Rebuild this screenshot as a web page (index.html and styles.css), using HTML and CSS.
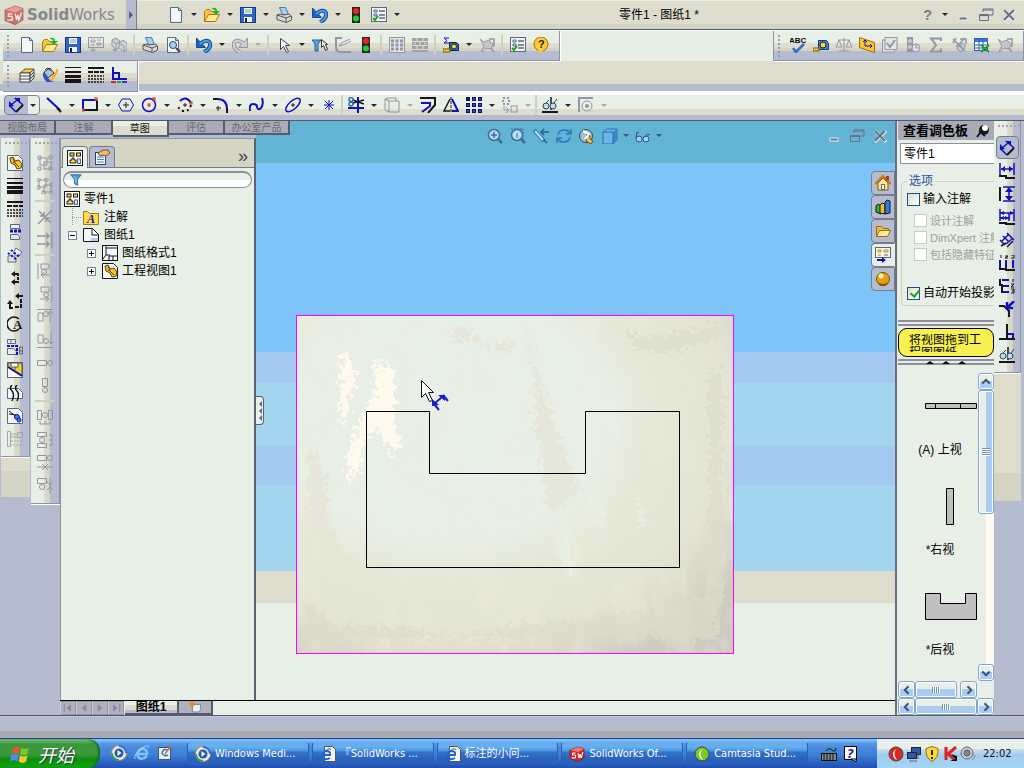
FILE: index.html
```
<!DOCTYPE html>
<html lang="zh-CN">
<head>
  <meta charset="UTF-8">
  <title>SolidWorks - 零件1 - 图纸1</title>
  <link rel="stylesheet" href="styles.css">
</head>
<body>
  <!-- Title bar -->
  <header class="titlebar">
    <div class="brand"><i data-icon="sw"></i><span><b>Solid</b>Works</span></div>
    <button class="expand" aria-label="展开菜单"></button>
    <div class="tools quick" data-items="new v open v save v print v undo v light options v"></div>
    <div class="doc-name">零件1 - 图纸1 *</div>
    <div class="tools window" data-items="help v min restore close"></div>
  </header>

  <!-- Toolbars -->
  <div class="bar-row bar-row-main">
    <div class="toolbar tools" data-items="new open save drawing assembly | print preview | undo v redo vg | select v filter sketch light | grid bricks | measure v zoomoff | options bubble"></div>
    <div class="toolbar tools" data-items="spell tape scales plane check clock sigma nodes table zoomoff"></div>
  </div>
  <div class="bar-row bar-row-line">
    <div class="toolbar tools" data-items="layers paint weight dashes corner"></div>
  </div>
  <div class="sketchbar tools" data-items="line v rect v hex circle v arc v fillet v spline v ellipse v point ; trim v convert vg offset mirror pattern v move vg ; relation v snap vg">
    <div class="split"><button class="tool" aria-label="智能尺寸"><i data-icon="dim"></i></button><button class="drop" aria-label="更多"></button></div>
  </div>

  <!-- Work area -->
  <main class="work">
    <nav class="tabs">
      <button>视图布局</button>
      <button>注解</button>
      <button class="active">草图</button>
      <button>评估</button>
      <button>办公室产品</button>
    </nav>

    <div class="side">
      <div class="side-col">
        <div class="vbar tools" data-items="part weight dashes partview projview breakA breakB circleA alignview section brokenline crop auxview"></div>
        <div class="filler"></div>
      </div>
      <div class="side-col">
        <div class="vbar tools" data-items="group ungroup | collapse toright | aleft aright atop abottom ahor aver | distH distV tightH tightV"></div>
      </div>
    </div>

    <aside class="tree-panel">
      <div class="tree-head">
        <button class="tree-tab active" aria-label="设计树"><i data-icon="tree"></i></button>
        <button class="tree-tab" aria-label="属性"><i data-icon="props"></i></button>
        <button class="more" aria-label="更多">»</button>
      </div>
      <label class="filter"><i data-icon="funnel"></i><input type="text" aria-label="过滤"></label>
      <ul class="tree">
        <li><i data-icon="tree"></i>零件1</li>
        <li class="lv1"><span class="dots"></span><i data-icon="folderA"></i>注解</li>
        <li class="lv1"><button class="node" aria-label="折叠"></button><i data-icon="sheet"></i>图纸1</li>
        <li class="lv2"><button class="node plus" aria-label="展开"></button><i data-icon="format"></i>图纸格式1</li>
        <li class="lv2"><button class="node plus" aria-label="展开"></button><i data-icon="partK"></i>工程视图1</li>
      </ul>
    </aside>

    <section class="canvas">
      <div class="view-tools tools" data-items="zoomfit zoomarea pencil rotate viewor cube v glasses v"></div>
      <div class="doc-buttons tools" data-items="min restore close"></div>
      <button class="flyout" aria-label="收起面板"><span></span><span></span><span></span></button>

      <svg class="paper" viewBox="0 0 438 339">
        <defs>
          <radialGradient id="paper" cx="0.34" cy="0.3" r="0.82">
            <stop offset="0" stop-color="#e8efe7"/>
            <stop offset="0.44" stop-color="#e8efe5"/>
            <stop offset="0.58" stop-color="#e6e8d8"/>
            <stop offset="0.8" stop-color="#e3e4d4"/>
            <stop offset="1" stop-color="#cdcdbf"/>
          </radialGradient>
          <!-- Large folds -->
          <filter id="crumple" x="0" y="0" width="100%" height="100%">
            <feTurbulence type="fractalNoise" baseFrequency="0.03 0.012" numOctaves="6" seed="8"/>
            <feColorMatrix values="0 0 0 0 0.86  0 0 0 0 0.85  0 0 0 0 0.75  6 0 0 0 -3"/>
          </filter>
          <filter id="rough" x="-10%" y="-10%" width="120%" height="120%">
            <feTurbulence type="fractalNoise" baseFrequency="0.2" numOctaves="4" seed="3"/>
            <feDisplacementMap in="SourceGraphic" scale="24" xChannelSelector="R" yChannelSelector="G"/>
          </filter>
        </defs>
        <rect width="438" height="339" fill="url(#paper)"/>
        <rect width="438" height="339" filter="url(#crumple)" opacity="0.35"/>
        <g filter="url(#rough)">
          <path fill="#e6e7d7" opacity="0.9" d="M232 6l8 44 22 70 22 58-30 22-14-80-4-70zM12 120l18 45 4 50 30 40-30-8-22-50zM150 22l14-12 30 22 34-12-20 20-18-8z"/>
          <path fill="#dcdccc" opacity="0.7" d="M330 14l20 10 78-16v14l-60 16-30-4zM10 286l30 24 80 4 40 8 60-12 80-6 60-8 60-20v48h-410zM412 60l14-10v240l-20-40 8-70z"/>
          <path fill="#e8efe7" opacity="0.9" d="M245 48l35 22 12 40 2 50 20 70-22-44-26-80zM268 180l10 90-16-30 6-40zM340 170l12 44-10-10zM310 60l16 30-6 40-10-20z"/>
          <path fill="#fffaee" d="M48 30l14 38-6 6-5 24-5 20-2-56zM79 48l6-8 2 14 10-4 2 60 6 20-8 12-16-30-8 6-10 34-10 20-2-30 16-46 12-20z"/>
        </g>
        <rect x="0.5" y="0.5" width="437" height="338" fill="none" stroke="#f0f"/>
        <path d="M70.500 96.500h63v62h156v-62h94v156h-313z" fill="none" stroke="#000"/>
        <path d="M125.500 65.500v17l4-4 4 8 3-1-4-8h5z" fill="#fff" stroke="#111"/>
        <path d="M143 95l-5-6M147 80l5 6M138 89l8-7" fill="none" stroke="#1a20c8" stroke-width="2"/>
        <path d="M136 91v-7l7 6zM142 80h7v6z" fill="#1a20c8"/>
      </svg>

      <div class="pane-tabs">
        <button aria-label="资源"><i data-icon="house"></i></button>
        <button aria-label="设计库"><i data-icon="books"></i></button>
        <button aria-label="文件探索器"><i data-icon="folder"></i></button>
        <button class="active" aria-label="查看调色板"><i data-icon="palette"></i></button>
        <button aria-label="外观"><i data-icon="ball"></i></button>
      </div>
    </section>

    <div class="sheets">
      <button class="nav" aria-label="第一页"><i data-icon="first"></i></button>
      <button class="nav" aria-label="上一页"><i data-icon="prev"></i></button>
      <button class="nav" aria-label="下一页"><i data-icon="next"></i></button>
      <button class="nav" aria-label="最后一页"><i data-icon="last"></i></button>
      <button class="sheet active">图纸1</button>
      <button class="sheet add" aria-label="添加图纸"><i data-icon="addsheet"></i></button>
    </div>

    <!-- View palette -->
    <aside class="palette">
      <h2>查看调色板<i data-icon="pin"></i></h2>
      <select aria-label="零件"><option>零件1</option></select>
      <fieldset>
        <legend>选项</legend>
        <label><input type="checkbox">输入注解</label>
        <label class="sub"><input type="checkbox" disabled>设计注解</label>
        <label class="sub"><input type="checkbox" disabled>DimXpert 注解</label>
        <label class="sub"><input type="checkbox" disabled>包括隐藏特征</label>
        <label class="auto"><input type="checkbox" checked>自动开始投影</label>
      </fieldset>
      <div class="splitter"></div>
      <div class="tip"><p>将视图拖到工程图图纸</p></div>
      <div class="splitter arrows"><span></span><span></span><span></span></div>
      <div class="views">
        <div class="view-list">
          <figure>
            <div class="shape"><svg width="52" height="6"><path d="M.5.5h51v5h-51zM10.500.5v5M35.500.5v5" fill="#c0c0c0" stroke="#000"/></svg></div>
            <figcaption>(A) 上视</figcaption>
          </figure>
          <figure>
            <div class="shape"><svg width="52" height="37"><path d="M21.500.5h7v36h-7z" fill="#c0c0c0" stroke="#000"/></svg></div>
            <figcaption>*右视</figcaption>
          </figure>
          <figure>
            <div class="shape"><svg width="52" height="27"><path d="M.5.5h15v10h25v-10h11v26h-51z" fill="#c0c0c0" stroke="#000"/></svg></div>
            <figcaption>*后视</figcaption>
          </figure>
        </div>
        <div class="scroll vertical">
          <button aria-label="向上"><i data-icon="up"></i></button><div class="thumb"></div><button aria-label="向下"><i data-icon="down"></i></button>
        </div>
      </div>
      <div class="scroll inner">
        <button aria-label="向左"><i data-icon="left"></i></button><div class="thumb"></div><button aria-label="向右"><i data-icon="right"></i></button>
      </div>
      <div class="scroll">
        <button aria-label="向左"><i data-icon="left"></i></button><div class="thumb"></div><button aria-label="向右"><i data-icon="right"></i></button>
      </div>
    </aside>

    <div class="right-col">
      <div class="vbar tools" data-items="dim hdim vdim basedim orddim hord vord chamfer datum relation"></div>
      <div class="filler"></div>
    </div>
  </main>

  <footer class="status"></footer>

  <!-- Windows taskbar -->
  <footer class="taskbar">
    <button class="start"><i data-icon="windows"></i>开始</button>
    <div class="launch">
      <button aria-label="播放器"><i data-icon="wmp"></i></button>
      <button aria-label="浏览器"><i data-icon="ie"></i></button>
      <button aria-label="桌面"><i data-icon="desk"></i></button>
    </div>
    <div class="tasks">
      <button><i data-icon="wmp"></i>Windows Medi...</button>
      <button><i data-icon="iepage"></i>『SolidWorks ...</button>
      <button><i data-icon="iepage"></i>标注的小问...</button>
      <button><i data-icon="sw"></i>SolidWorks Of...</button>
      <button><i data-icon="cam"></i>Camtasia Stud...</button>
    </div>
    <div class="lang"><i data-icon="keyboard"></i><i data-icon="qmark"></i></div>
    <div class="tray">
      <i data-icon="camred"></i><i data-icon="net"></i><i data-icon="shield"></i><i data-icon="kav"></i><i data-icon="speaker"></i>
      <time>22:02</time>
    </div>
  </footer>

  <script src="icons.js"></script>
</body>
</html>
```
FILE: styles.css
```
* {
  box-sizing: border-box;
}

body {
  margin: 0;
  height: 100vh;
  display: flex;
  flex-direction: column;
  overflow: hidden;
  background: #b6bccf;
  color: #000;
  font: 12px/14px "Liberation Sans", "Noto Sans CJK SC", sans-serif;
}

button, input, select {
  font: inherit;
  margin: 0;
  padding: 0;
}

button {
  border: 0;
  background: none;
  color: inherit;
}

i {
  display: block;
  flex: none;
  width: 16px;
  height: 16px;
}

i svg {
  display: block;
  width: 16px;
  height: 16px;
}

/* Shared tool buttons */
.tools {
  display: flex;
  align-items: center;
}

.tool {
  display: flex;
  flex: none;
  align-items: center;
  justify-content: center;
  width: 23px;
  height: 23px;
}

.drop {
  flex: none;
  width: 13px;
  height: 20px;
  display: flex;
  align-items: center;
  justify-content: center;
}

.drop::after {
  content: "";
  border: 3px solid transparent;
  border-top-color: #222838;
  border-bottom: 0;
}

.drop.off::after {
  border-top-color: #a8aab0;
}

.sep {
  flex: none;
  width: 8px;
  height: 20px;
  padding: 0 3px;
  background: #d0d0c0 content-box;
}

.sep.small {
  width: 4px;
  padding: 0 1px;
}

/* Title bar */
.titlebar {
  flex: none;
  display: flex;
  align-items: center;
  height: 30px;
  border-bottom: 1px solid #555a68;
  background: linear-gradient(#e8eee6 1px, #dddccd 1px, #dddccd 24px, #d4d4c4 24px);
}

.brand {
  display: flex;
  align-items: center;
  gap: 3px;
  width: 126px;
  height: 29px;
  padding-left: 4px;
  background: linear-gradient(#dddccd 24px, #cfcfc3 24px);
  color: #85878d;
  font: 15px/20px "DejaVu Sans", sans-serif;
}

.brand i, .brand i svg {
  width: 20px;
  height: 20px;
}

.brand i {
  opacity: 0.6;
}

.expand {
  width: 11px;
  height: 29px;
  display: flex;
  align-items: center;
  justify-content: center;
  background: #b6bccf;
  border-right: 1px solid #777c8c;
}

.expand::after {
  content: "";
  border: 4px solid transparent;
  border-left-color: #555d80;
  border-right: 0;
}

.quick {
  padding-left: 27px;
}

.doc-name {
  flex: 1;
  text-align: center;
}

.window {
  padding-right: 4px;
}

/* Horizontal toolbars */
.bar-row {
  flex: none;
  height: 31px;
  display: flex;
  justify-content: space-between;
  padding-left: 3px;
}

.bar-row-main {
  border-top: 1px solid #fff;
  background: #e6ede5;
}

.bar-row-line {
  background: linear-gradient(#dddccd 23px, #b6bccf 23px, #b6bccf 30px, #fff 30px);
}

.toolbar {
  padding: 0 7px 2px 12px;
  background: linear-gradient(#e8efe7 12px, #dddccd 12px, #dddccd 17px, #d4d4c4 17px, #d4d4c4 20px, #b6bccf 20px);
  border-right: 1px solid #8f93a4;
  border-bottom: 1px solid #8f93a4;
  box-shadow: 1px 1px 0 #fff;
  position: relative;
}

.toolbar::before {
  content: "";
  position: absolute;
  left: 4px;
  top: 4px;
  width: 2px;
  height: 22px;
  background: repeating-linear-gradient(#999dae 0 2px, transparent 2px 4px);
}

.toolbar + .toolbar {
  border-left: 1px solid #8f93a4;
}

.sketchbar {
  flex: none;
  height: 29px;
  padding: 0 0 5px 4px;
  border-top: 3px solid #fff;
  border-bottom: 1px solid #555a68;
  background: linear-gradient(#e8efe7 14px, #dddccd 14px, #dddccd 20px, #b6bccf 20px);
}

.split {
  display: flex;
  align-items: center;
  width: 36px;
  height: 20px;
  margin-right: 2px;
  border: 1px solid #7d8192;
  border-radius: 4px;
  background: linear-gradient(90deg, #b6bccf 23px, #e8efe7 23px);
}

.split .tool {
  width: 22px;
  height: 18px;
}

.split .drop {
  width: 12px;
}

/* Work area */
.work {
  flex: 1;
  min-height: 0;
  display: grid;
  grid-template-columns: 60px 196px 1fr 99px 30px;
  grid-template-rows: 17px 1fr 15px;
}

.tabs {
  grid-column: 1 / 3;
  grid-row: 1;
  z-index: 1;
  display: flex;
  align-items: flex-start;
  width: 290px;
}

.tabs button {
  flex: 57 0 0;
  height: 14px;
  border: solid #555b70;
  border-width: 0 2px 2px 0;
  background: #aaabb6;
  color: #666974;
  font-size: 10px;
  line-height: 11px;
  white-space: nowrap;
}

.tabs button:last-child {
  flex-grow: 66;
}

.tabs .active {
  height: 16px;
  background: linear-gradient(#e8efe7 5px, #dddccd 5px);
  color: #111;
}

.side {
  grid-column: 1;
  grid-row: 2 / 4;
  display: flex;
}

.side-col {
  width: 30px;
  padding-left: 1px;
}

.vbar {
  flex-direction: column;
  position: relative;
  padding: 13px 1px 6px 0;
  border-right: 1px solid #8f93a4;
  border-bottom: 1px solid #8f93a4;
  box-shadow: 0 1px 0 #fff;
  background: linear-gradient(90deg, #e8efe7 13px, #dddccd 13px, #d4d4c4 19px, #b6bccf 19px);
}

.vbar::before {
  content: "";
  position: absolute;
  left: 4px;
  top: 4px;
  width: 22px;
  height: 2px;
  background: repeating-linear-gradient(90deg, #a3a6b5 0 2px, transparent 2px 4px);
}

.vbar .sep {
  width: 20px;
  height: 8px;
  padding: 3px 0;
}

.filler {
  height: 40px;
  background: linear-gradient(#dddccd 35%, #d4d4c4 35%);
}

/* Feature tree */
.tree-panel {
  grid-column: 2;
  grid-row: 2;
  border: solid #8f93a4;
  border-width: 1px 2px 0 1px;
  border-right-color: #5a6075;
  background: #e8efe6;
}

.tree-head {
  display: flex;
  align-items: flex-end;
  gap: 1px;
  height: 29px;
  padding-left: 1px;
  border-bottom: 1px solid #777c8c;
  background: #d5d5c6;
}

.tree-tab {
  display: flex;
  align-items: center;
  justify-content: center;
  width: 26px;
  height: 21px;
  border: 1px solid #777c8c;
  border-bottom: 0;
  border-radius: 4px 4px 0 0;
  background: #b6bccf;
}

.tree-tab.active {
  height: 22px;
  margin-bottom: -1px;
  background: #e8efe6;
}

.more {
  margin-left: auto;
  padding: 0 6px 4px 0;
  color: #444;
  font-size: 18px;
}

.filter {
  display: flex;
  align-items: center;
  height: 17px;
  margin: 3px 2px 0;
  padding-left: 6px;
  border: 1px solid #8c8e9c;
  border-top-width: 2px;
  border-radius: 9px;
  background: linear-gradient(#e8efe7 50%, #fff 50%);
}

.filter input {
  flex: 1;
  min-width: 0;
  height: 12px;
  border: 0;
  outline: 0;
  background: none;
}

.filter i, .filter i svg {
  width: 12px;
  height: 12px;
}

.tree {
  margin: 2px 0 0;
  padding: 0;
  list-style: none;
}

.tree li {
  display: flex;
  align-items: center;
  gap: 4px;
  height: 18px;
  padding-left: 3px;
}

.tree .lv1 {
  gap: 5px;
  padding-left: 7px;
}

.tree .lv2 {
  padding-left: 26px;
}

.tree .lv2 i {
  margin-left: 2px;
}

.dots {
  width: 9px;
  height: 18px;
  margin-right: -4px;
  margin-left: 4px;
  background:
    repeating-linear-gradient(#9a9ca8 0 1px, transparent 1px 2px) 0 0 / 1px 100% no-repeat,
    repeating-linear-gradient(90deg, #9a9ca8 0 1px, transparent 1px 2px) 0 50% / 100% 1px no-repeat;
}

.lv1 i {
  margin-left: 1px;
}

.node {
  width: 9px;
  height: 9px;
  border: 1px solid #7c8294;
  background: linear-gradient(#000, #000) center / 5px 1px no-repeat, #fff;
}

.plus {
  background: linear-gradient(#000, #000) center / 5px 1px no-repeat, linear-gradient(#000, #000) center / 1px 5px no-repeat, #fff;
}

/* Drawing canvas */
.canvas {
  grid-column: 3;
  grid-row: 1 / 3;
  position: relative;
  overflow: hidden;
  background: linear-gradient(#62b3d4 42px, #7dc5f8 42px, #7dc5f8 231px, #a4c8ef 231px, #a4c8ef 262px, #a3d5ef 262px, #a3d5ef 325px, #a4c8ef 325px, #a4c8ef 364px, #a3d5ef 364px, #a3d5ef 450px, #dddccd 450px, #dddccd 482px, #e8efe6 482px);
}

.view-tools {
  position: absolute;
  left: 227px;
  top: 3px;
}

.view-tools .drop {
  width: 10px;
}

.view-tools .drop::after {
  border-top-color: #2c5c88;
}

.doc-buttons {
  position: absolute;
  right: 4px;
  top: 3px;
}

.paper {
  position: absolute;
  left: 40px;
  top: 194px;
  width: 438px;
  height: 339px;
}

.flyout {
  position: absolute;
  left: 0;
  top: 275px;
  display: flex;
  flex-direction: column;
  align-items: flex-end;
  justify-content: space-around;
  width: 8px;
  height: 29px;
  padding: 3px 1px;
  border: 1px solid #5a6075;
  border-left: 0;
  border-radius: 0 4px 4px 0;
  background: #e8efe6;
}

.flyout span {
  border: 3px solid transparent;
  border-right-color: #5d6498;
  border-left: 0;
}

.pane-tabs {
  position: absolute;
  right: 0;
  top: 50px;
  display: flex;
  flex-direction: column;
}

.pane-tabs button {
  display: flex;
  align-items: center;
  justify-content: center;
  width: 24px;
  height: 24px;
  border: 1px solid #777c8c;
  border-radius: 4px 0 0 4px;
  background: #b6bccf;
}

.pane-tabs .active {
  background: #e8efe6;
  border-right-color: #e8efe6;
}

.sheets {
  grid-column: 2 / 4;
  grid-row: 3;
  display: flex;
  border-top: 1px solid #000;
  background: #e8efe6;
}

.nav {
  display: flex;
  align-items: center;
  justify-content: center;
  width: 16px;
  height: 14px;
  border: 1px solid #8f93a4;
  border-left-color: #c8cad4;
  background: #b0b1bd;
}

.nav i, .nav i svg {
  width: 12px;
  height: 12px;
}

.sheet {
  width: 54px;
  height: 14px;
  margin-left: 1px;
  border: solid #555b70;
  border-width: 0 2px 2px 0;
  background: linear-gradient(#e8efe7 4px, #dddccd 4px, #dddccd 9px, #b6bccf 9px);
  font-weight: bold;
  line-height: 12px;
}

.sheet.add {
  display: flex;
  align-items: center;
  justify-content: center;
  width: 34px;
  margin: 0;
  background: #b0b1bd;
}

.add i, .add i svg {
  width: 12px;
  height: 12px;
}

/* View palette */
.palette {
  grid-column: 4;
  grid-row: 1 / 4;
  display: flex;
  flex-direction: column;
  overflow: hidden;
  min-width: 0;
  border-left: 2px solid #696e82;
  padding-left: 1px;
  background: #e8efe6;
}

.palette h2 {
  flex: none;
  display: flex;
  align-items: center;
  justify-content: space-between;
  height: 19px;
  margin: 0;
  padding: 0 3px 0 5px;
  background: #aaabb6;
  font-size: 13px;
  line-height: 18px;
  white-space: nowrap;
}

.palette select {
  flex: none;
  height: 21px;
  margin: 3px 0 0 2px;
  padding-left: 3px;
  border: 1px solid #8c8e9c;
  border-right: 0;
  border-radius: 0;
  appearance: none;
  background: #fff;
}

.palette fieldset {
  flex: none;
  min-width: 0;
  height: 132px;
  margin: 10px 0 0 3px;
  padding: 1px 0 0 5px;
  border: 1px solid #cfd0c4;
  border-right: 0;
  border-radius: 5px 0 0 5px;
  white-space: nowrap;
}

.palette legend {
  padding: 0 2px;
  color: #2b4ea8;
}

.palette label {
  display: flex;
  align-items: center;
  gap: 3px;
  height: 20px;
}

.palette .sub {
  height: 17px;
  padding-left: 7px;
  color: #a0a19a;
  font-size: 11px;
}

.palette .sub:nth-of-type(2) {
  margin-top: 3px;
}

.palette .auto {
  margin-top: 20px;
}

.palette input {
  flex: none;
  appearance: none;
  width: 13px;
  height: 13px;
  border: 1px solid #1c5180;
  background: linear-gradient(135deg, #dddccd, #fff);
}

.palette input:disabled {
  border-color: #cacbc0;
  background: #fff;
}

.palette input:checked::after {
  content: "";
  display: block;
  width: 4px;
  height: 7px;
  margin-left: 4px;
  border: solid #21a121;
  border-width: 0 2px 2px 0;
  transform: rotate(40deg);
}

.splitter {
  flex: none;
  height: 6px;
  margin: 14px 0 2px;
  border: solid #8f8f9c;
  border-width: 2px 0;
}

.splitter.arrows {
  display: flex;
  justify-content: center;
  gap: 8px;
  margin: 2px 0 0;
}

.arrows span {
  border: 4px solid transparent;
  border-bottom: 3px solid #000;
  border-top: 0;
  height: 3px;
}

.tip {
  flex: none;
  height: 29px;
  padding: 5px 10px 0;
  border: 1px solid #000;
  border-radius: 9px;
  background: #f8f04e;
}

.tip p {
  width: 74px;
  height: 18px;
  margin: 0;
  overflow: hidden;
  line-height: 13px;
  word-break: break-all;
}

.views {
  flex: 1;
  min-height: 0;
  display: flex;
  overflow: hidden;
}

.view-list {
  flex: 1;
  min-width: 0;
}

.view-list figure {
  height: 100px;
  margin: 0;
  padding-top: 4px;
}

.shape {
  display: flex;
  align-items: center;
  height: 74px;
  padding-left: 27px;
}

.shape svg {
  flex: none;
}

.view-list figcaption {
  padding-left: 4px;
  text-align: center;
}

.scroll {
  flex: none;
  display: flex;
  height: 17px;
}

.scroll button, .thumb {
  display: flex;
  align-items: center;
  justify-content: center;
  border: 1px solid #7ea6cf;
  border-radius: 3px;
  box-shadow: inset 0 0 0 1px #fff;
  background: linear-gradient(#e8efe7 50%, #a9cdf2 50%);
}

.scroll button {
  flex: none;
  width: 17px;
  height: 17px;
}

.scroll i, .scroll i svg {
  width: 12px;
  height: 12px;
}

.thumb {
  flex: 1;
}

.thumb::after {
  content: "";
  width: 8px;
  height: 6px;
  background: repeating-linear-gradient(90deg, #7590bb 0 1px, #fff 1px 2px);
}

.scroll.inner {
  width: 79px;
}

.scroll.inner .thumb {
  margin-right: 3px;
}

.scroll.vertical {
  flex-direction: column;
  width: 16px;
  height: auto;
  margin: 8px 0 0;
  background: linear-gradient(90deg, #e8efe6 50%, #fffaf0 50%);
}

.vertical button {
  width: 16px;
}

.vertical .thumb {
  flex: 0 1 124px;
  margin-bottom: auto;
  background: linear-gradient(90deg, #e8efe7 50%, #a9cdf2 50%);
}

.vertical .thumb::after {
  height: 8px;
  background: repeating-linear-gradient(#7590bb 0 1px, #fff 1px 2px);
}

.right-col {
  grid-column: 5;
  grid-row: 1 / 4;
  padding-right: 3px;
}

.right-col .vbar {
  padding: 15px 0 6px;
}

.right-col .filler {
  height: 128px;
  background: linear-gradient(#dddccd 100px, #d4d4c4 100px);
}

.right-col .tool:first-child {
  border: 1px solid #777c8c;
  border-radius: 4px;
  background: #b6bccf;
}

.status {
  flex: none;
  height: 23px;
  border-top: 1px solid #555a68;
  background: linear-gradient(#c4c9d8 1px, #b6bccf 1px, #b6bccf 15px, #aaabb2 15px);
}

/* Windows taskbar */
.taskbar {
  flex: none;
  height: 30px;
  display: flex;
  align-items: stretch;
  border-top: 1px solid #1c44a8;
  background: linear-gradient(#76bdf5 3px, #5f9fe8 3px, #4a8cdf 8px, #3f80d4 16px, #2a64c4 23px, #1f4fb0);
  color: #fff;
  font: 11px/14px "DejaVu Sans Condensed", "Noto Sans CJK SC", sans-serif;
}

.start {
  display: flex;
  align-items: center;
  gap: 8px;
  width: 100px;
  padding-left: 10px;
  border-radius: 0 12px 12px 0;
  background: linear-gradient(#7cc47c, #3c963c 5px, #3a9a3a 16px, #0e8c0e 20px, #0cab0c);
  box-shadow: inset -2px 0 2px #1b6a2b;
  font: italic 18px/20px "Noto Sans CJK SC", sans-serif;
  text-shadow: 1px 1px 1px #234;
}

.start i, .start i svg {
  width: 20px;
  height: 20px;
}

.launch {
  display: flex;
  align-items: center;
  gap: 7px;
  padding: 0 14px 2px 11px;
}

.tasks {
  flex: 1;
  display: flex;
  gap: 3px;
  padding: 3px 13px 3px 0;
}

.tasks button {
  flex: 1;
  min-width: 0;
  display: flex;
  align-items: center;
  gap: 4px;
  padding-left: 7px;
  border: 1px solid #2b60b8;
  border-top-color: #7c9ee0;
  border-radius: 3px;
  background: linear-gradient(#62b0f0 4px, #4a94e0 8px, #3572c8 9px, #2b62bc 16px, #2b60bc);
  white-space: nowrap;
}

.lang {
  display: flex;
  align-items: center;
  gap: 6px;
  padding-right: 18px;
}

.tray {
  display: flex;
  align-items: center;
  gap: 2px;
  width: 147px;
  padding-left: 11px;
  background: linear-gradient(#e8efe7 10px, #ccdff0 10px, #a3cbee 16px, #a3d5f4);
  color: #111;
}

.tray time {
  margin-left: 5px;
}
```
FILE: icons.js
```
// Small helpers for 16x16 icon shapes
const s = (c, d, w = 1) => `<path d="${d}" fill="none" stroke="${c}" stroke-width="${w}"/>`;
const f = (c, d, o = 'none') => `<path d="${d}" fill="${c}" stroke="${o}"/>`;
const c = (x, y, r, fill, o = 'none', w = 1) => `<circle cx="${x}" cy="${y}" r="${r}" fill="${fill}" stroke="${o}" stroke-width="${w}"/>`;
const r = (x, y, w, h, fill, o = 'none') => `<rect x="${x}" y="${y}" width="${w}" height="${h}" fill="${fill}" stroke="${o}"/>`;
const t = (x, y, size, color, text, style = '') => `<text x="${x}" y="${y}" font-size="${size}" fill="${color}" ${style}>${text}</text>`;

const B = '#1010c0', G = '#9496a2', K = '#16161c', N = '#5a6980';

const page = f('#f2f6fa', 'M2.500.5h8l3 3v12h-11z', N) + s(N, 'M10.500.5v3h3');
const pageWide = (o) => f('#f2f6fa', 'M.5.5h11l4 4v11h-15z', o);
const clip = f('#f5c52a', 'M3 3l3-1 2 4 4-1 3 4-1 4-4 1-2-4-4-2z', '#5c430c') + s('#5c430c', 'M6 3l2 5 4 4M8 6l-2 2');
const sheetTree = r(.5, .5, 15, 15, '#fff', K) + r(3, 3, 4, 3, '#ffe040', K) + r(9.500, 3, 4, 3, '#ffe040', K) + f('#ffe040', 'M5 8h2v2h2v3h-6v-3h2z', K) + r(10.500, 9, 3, 4.500, '#cfe2fa', N);
const lens = (x) => c(7, 7, 5.500, '#b9dcf4', '#3c6ea0', 1.500) + s('#3c6ea0', 'M11 11l4 4', 2.500) + x;
const ball = (a) => c(8, 8, 7, a, '#444') + f('#fff', 'M11 2Q3 5 9 14Q5 12 5 8Q5 4 11 2z');

const icons = {
  sw: f('#c92c2c', 'M1 4l8-3 6 2v9l-6 3.500-8-3z', '#8b2222') + f('#e77', 'M1 4l8-3 6 2-6 3z') + s('#fff', 'M6.500 7h-3v2h3v3h-4', 1) + s('#fff', 'M9 7l1 5 1-4 1 4 2-6', 1),
  new: page,
  open: f('#f6c444', 'M.5 14.500v-10l2-2h3l2 2h5v3', '#a87818') + f('#ffe890', 'M.5 14.500l4-7h11l-4 7z', '#a87818') + f('#28b428', 'M8 1q5-1 5 3h3l-4 4-4-4h3q0-2-3-2z'),
  save: r(.5, .5, 15, 15, '#2c66cc', '#16387e') + r(4, 1, 8, 6, '#eef4fa') + s('#8aa', 'M5 3h6M5 5h6') + r(4, 10, 8, 5, '#eef4fa') + r(5, 11, 2, 4, '#222'),
  print: f('#a8d0f4', 'M3.500.5h6l3 7h-6z', '#4d78a8') + f('#d8dad8', 'M1 8l3-1 3 1 6-1 2.500 2v4l-5 2.500-9.500-3z', '#555') + s('#555', 'M1 8l9 3 5-2M10 11v4'),
  preview: page + c(8, 8, 3.500, '#a8d4f4', '#345') + s('#345', 'M11 11l4 4', 2),
  undo: s('#164b94', 'M4 7q7-6 10-1 1 6-6 9', 4) + f('#1c64c4', 'M.5 1v9.500h9z', '#164b94') + s('#4ca0ec', 'M4 7q7-6 10-1 1 6-6 9', 2),
  redo: s(G, 'M12 7q-7-6-10-1-1 6 6 9', 4) + f('#c9ccd0', 'M15.500 1v9.500h-9z', G) + s('#d4d6d6', 'M12 7q-7-6-10-1-1 6 6 9', 2),
  light: r(4, 0, 8, 16, '#262626') + c(8, 4, 3, '#ee2222') + c(8, 11.500, 3, '#22cc33'),
  options: r(.5, .5, 15, 14, '#eef3fa', N) + s('#222', 'M8 4h6M8 8h6M8 11h6') + s(N, 'M3 3h3v2h-3zM3 7h3v2h-3z') + s('#16a016', 'M2 11l2 2 3-4', 2),
  drawing: r(.5, .5, 15, 10, 'none', G) + s(G, 'M3 3h4v2h-4zM9 3h4M9 6h4v2h-4zM3 8h3M5 10v5M2 13h6'),
  assembly: f('#d0d2d0', 'M1 3l4-2 4 3v6l-4 3-4-4z', G) + f('#d0d2d0', 'M8 6l4-3 4 3v7l-3 2-5-4z', G) + s(G, 'M5 7l4-3M1 3l4 4v6M8 6l5 3v6M1 13h5M4 11v4', 1),
  select: f('#eef', 'M4.500 1.500v11l3-3 3 6 2-1-3-6h4z', '#444'),
  filter: f('#58a4e0', 'M0 3h9l-3 4v7h-3v-7z', '#245f9c') + f('#eee', 'M9.500 2.500v8l2-2 2 5 2-1-2-5h2z', '#333'),
  sketch: s(G, 'M7 1h-6v9q0 5 5 5h10', 2) + s(G, 'M15 2l-9 4-2 3 4-1 8-4'),
  grid: r(.5, .5, 15, 15, '#e4e7e8', G) + [3, 7, 11].map(y => [2, 6.500, 11].map(x => r(x, y - .5, 3, 3, G)).join('')).join(''),
  bricks: r(0, 1, 16, 14, '#9fa1a8') + s('#dddccd', 'M0 4.500h16M0 8.500h16M0 12.500h16M5 1v3M11 1v3M8 5v3M3 5v3M13 5v3M5 9v3M11 9v3'),
  measure: s(B, 'M6 1h-5l3 2.500-3 2.500h5') + f('#2b6cd0', 'M6.500 5.500h7l2 2v6h-9z', '#123') + c(11, 9.500, 2.500, '#ffd040', '#222') + f('#ffc820', 'M0 12h7v3h-7z', '#7a5a00'),
  zoomoff: f('#c4c6c8', 'M1 2l4 3 5-2 4 4-2 5-5-1-4 4-1-1 3-5z', G) + s(G, 'M10 2h5v8M12 11l3 4', 1.500),
  bubble: c(8, 7, 7, '#ffcc33', '#9c6a10') + f('#ffcc33', 'M5 12l1 4 5-3z') + t(5, 11, 11, '#222', '?', 'font-weight="bold"'),
  spell: t(-1, 6, 8, '#000', 'ABC', 'font-weight="bold"') + s('#2c6cd0', 'M3 11l3 4 8-8', 2.500),
  tape: f('#3f86d8', 'M5.500 3.500h8l2 3v6h-10z', '#123a7c') + c(10, 8, 3, '#ffd040', '#222') + f('#ffc820', 'M0 11h6v3h-6z', '#7a5a00'),
  scales: s(G, 'M8 1v13M3 14h10M2 3h12M3 3l-3 7h6zM13 3l-3 7h6z'),
  plane: f('#ffc62c', 'M.5.5l15 5v10l-15-5z', '#9a6c10') + s(B, 'M6 3v6h7M4 5l2-2 2 2M11 7l2 2-2 2'),
  check: r(.5, 3, 12, 12, '#e3e6e4', G) + r(3, .5, 12, 12, '#e3e6e4', G) + s(G, 'M5 6l3 4 5-7', 2),
  clock: r(2, 0, 6, 15, G) + c(5, 4, 2, '#ccc') + c(5, 10, 2, '#ccc') + c(11, 11, 4, '#dde', G) + s(G, 'M11 8v3h3'),
  sigma: s(G, 'M13 4v-2.500h-10l5 6.500-5 6.500h10v-3', 2),
  nodes: f('#c4c6c8', 'M8 8l4-2 3 3-5 6-4-3z', G) + s(G, 'M2 2l12 12M14 1l-9 9M5 1l-3 5M9 2h6v5', 1.500),
  table: r(.5, 1.500, 13, 12, '#fff', '#2b5eb0') + r(1, 2, 13, 3, '#3c78d0') + s('#2b5eb0', 'M1 8h12M1 11h12M5 2v11M9 2v11') + s('#1c9c2c', 'M7 8l8 7M15 8l-8 7', 2),
  layers: f('#f4c848', 'M1 6l5-4h9l-4 4z', '#7a5a10') + f('#fff', 'M1 6h10v9h-10z', '#444') + f('#ddd', 'M11 6l4-4v9l-4 4z', '#444') + s('#444', 'M1 9h10l4-4M1 12h10l4-4'),
  paint: f('#b4c0d0', 'M2 5l6-4 4 5-6 5z', '#333') + s('#333', 'M3 3q3-4 6 1') + f('#2454c8', 'M1 5q-1 6 4 10h7q-7-3-8-7z') + s('#f0b020', 'M16 2l-4 7-3 5', 2.500),
  weight: r(0, 0, 16, 1, K) + r(0, 4, 16, 2, K) + r(0, 8, 16, 3, K) + r(0, 12, 16, 4, K),
  dashes: s(K, 'M0 1h16', 2) + `<path d="M0 5h16" stroke="${K}" stroke-width="2" stroke-dasharray="5 1"/><path d="M0 9h16M0 12h16M0 15h16" stroke="${K}" stroke-width="1.500" stroke-dasharray="2 1"/>`,
  corner: s(B, 'M2 0v12h14M2 6h6v6', 2) + r(0, 14, 5, 2, '#e02020') + r(6, 14, 4, 2, '#20b020') + r(11, 14, 5, 2, '#2040d0'),

  dim: s(B, 'M1 8l7 7M7 1l8 7M3 8l6-5', 1.500) + f(B, 'M1 10v-6l5 5zM6 1h6v5z') + s(K, 'M8 15l7-7', 2),
  line: s(B, 'M1 1l13 12', 2) + s(K, 'M11 11l4 4', 2),
  rect: r(1, 3, 14, 10, 'none', B) + s(B, 'M1 13v-10h14', 2) + s(K, 'M1 13h14v-9', 2) + r(0, 12, 2, 2, '#fff', '#d02020') + r(13, 1, 2, 2, '#fff', '#d02020'),
  hex: f('none', 'M4 2h8l3.500 6-3.500 6h-8l-3.500-6z', B) + s(K, 'M5 8h6M8 5v6'),
  circle: c(8, 8, 6.500, 'none', B, 1.500) + r(7, 7, 2, 2, '#fff', '#d02020') + r(12, 1, 2, 2, '#fff', '#d02020'),
  arc: s(B, 'M3 4q6-6 11 2', 2) + `<path d="M14 8q-2 7-8 6-5-2-5-6" fill="none" stroke="${K}" stroke-width="2" stroke-dasharray="2 3"/>` + s(K, 'M6 8h4M8 6v4') + r(13, 5, 2, 2, '#fff', '#d02020'),
  fillet: s(B, 'M4 2q10 0 10 10', 2) + s(K, 'M0 2h5M14 11v5', 2) + s(K, 'M5 9v5M3 11h5'),
  spline: s(B, 'M1 14q-1-7 3-7 4 0 4 3 1 4 4 1 3-4 1-10', 2),
  ellipse: `<ellipse cx="8" cy="8" rx="9" ry="4" transform="rotate(-42 8 8)" fill="none" stroke="${B}" stroke-width="1.500"/>` + s(K, 'M6 8h4M8 6v4'),
  point: s(B, 'M8 3v10M3 8h10M4 4l8 8M12 4l-8 8'),
  trim: s(B, 'M10 0v16M0 11h16', 2) + s(K, 'M5 3l11 4M5 6l11-3', 1.500) + c(3, 2.500, 2, 'none', '#2c6cb0', 1.500) + c(3, 7, 2, 'none', '#2c6cb0', 1.500),
  convert: s(G, 'M1 2l3-1h8v3M1 2v11l4 2v-11zM5 4h10v11h-10M1 2l4 2'),
  offset: s(K, 'M0 1h15v7l-7 8', 2) + s(B, 'M1 6h9v3l-8 6', 2),
  mirror: s(K, 'M7 2l-6 12h6', 1.500) + s(B, 'M9 2l6 12h-6', 2) + `<path d="M8 0v16" stroke="${K}" stroke-dasharray="3 1"/>`,
  pattern: [0, 6, 12].map(y => [0, 6, 12].map(x => r(x + .5, y + .5, 3, 3, x + y ? '#3048d0' : '#222', '#101060')).join('')).join(''),
  move: `<path d="M1 1h6v6h-6z" fill="none" stroke="${G}" stroke-width="2" stroke-dasharray="2 2"/>` + r(9, 9, 6, 6, 'none', G) + s(G, 'M2 9v4h4M4 10l3 3-3 3'),
  relation: s(K, 'M0 15h16', 2) + s(K, 'M9 0v13', 1.500) + c(4, 9, 3, '#bcdcf4', '#345') + c(11, 9, 3, '#bcdcf4', '#345') + s('#345', 'M4 6l3-3M12 6l3-4'),
  snap: s(G, 'M1 15v-14h14', 2) + c(9, 9, 5, 'none', G) + c(9, 9, 2, G),

  partview: f('#eef', 'M3.500.5h9v4h-9z', N) + `<path d="M3 7h11" stroke="${B}" stroke-width="3" stroke-dasharray="3 1"/>` + f('#dde4ee', 'M3.500 10.500h7l2 2v3h-9z', N),
  projview: f('#eef', 'M9 1l6 4-4 5-5-4z', N) + f('#dde4ee', 'M1 9l4-1 4 3v4h-8z', N) + `<path d="M1 6l9 7M4 3l9 7" stroke="${B}" stroke-width="2" stroke-dasharray="2 2"/>`,
  breakA: `<path d="M11 3v10" stroke="${K}" stroke-width="2" stroke-dasharray="3 1"/>` + f(K, 'M4 12l4-3v6zM4 4l4-3v6z') + s(K, 'M7 12h5M7 4h5', 2),
  breakB: `<path d="M14 6v8h-7" fill="none" stroke="${K}" stroke-width="2" stroke-dasharray="4 1"/>` + s(K, 'M3 10v5h3M11 3h5', 2) + f(K, 'M0 11l3-4 3 4zM8 3l4-3v6z'),
  circleA: s(K, 'M12 3a7 7 0 1 0 0 10', 1.500) + t(6, 13, 13, K, 'A', 'font-family="Liberation Serif" font-weight="bold"'),
  alignview: s(N, 'M.5.5h8v4h-8zM4 .5v4M.5 9.500h6l3 3v3h-9zM12.500 8h3v7h-3zM12.500 12h3') + `<path d="M0 7h10v9" fill="none" stroke="${B}" stroke-width="2" stroke-dasharray="3 1"/>`,
  section: r(.5, .5, 15, 15, '#fff', N) + f('#f0d030', 'M1 1h14v12l-14-8z', '#555') + f('#fff', 'M4 1h7v4h-7z', '#555') + s('#555', 'M8 5v3') + s(B, 'M1 5l14 9', 2),
  brokenline: f('#f2f6fa', 'M.5 3.500h11l4 4v6h-15z', N) + s(K, 'M5 0q-3 3 0 6t0 10M10 0q-3 3 0 6t0 10', 1.500),
  crop: pageWide(N) + s(K, 'M2 3l8 6M2 6l7 1') + c(10, 9, 2.500, '#3a80d8', B) + c(12, 12, 2, '#3a80d8', B),
  auxview: s('#a4a6a8', 'M.5.5h3v15h-3zM4 3h7M4 6h7M11 1.500h4.500v5h-5z') + `<path d="M4 10h12v4h-12" fill="none" stroke="#a4a6a8" stroke-dasharray="2 1"/>`,
  group: r(3, 3, 7, 7, 'none', G) + r(7, 7, 7, 7, 'none', G) + s(G, 'M1 1h3v3h-3zM12 1h3v3h-3zM1 12h3v3h-3zM12 12h3v3h-3z'),
  ungroup: r(2, 2, 7, 7, 'none', G) + r(7, 7, 7, 7, 'none', G) + s(G, 'M0 0h3v3h-3zM8 0h3v3h-3zM0 8h3v3h-3zM13 5h3v3h-3zM13 13h3v3h-3zM5 13h3v3h-3z'),
  collapse: s(G, 'M15 1l-14 14M2 2l5 5M7 3v4h-4M14 14l-5-5M9 13v-4h4', 1.500),
  toright: s(G, 'M15 0v16M0 4h12M9 1l3 3-3 3M0 12h12M9 9l3 3-3 3', 1.500),
  aleft: s(G, 'M1 0v16M4 1h8v5h-8zM4 12h9M7 9l-3 3 3 3') + c(7, 9, 2.500, 'none', G),
  aright: s(G, 'M15 0v16M4 1h8v5h-8zM3 13h9M9 10l3 3-3 3') + c(9, 9, 2.500, 'none', G),
  atop: s(G, 'M1 4h5v8h-5zM13 13V2M10 5l3-3 3 3M0 .5h16') + c(9, 5, 2.500, 'none', G),
  abottom: s(G, 'M1 3h5v8h-5zM14 1v11M11 9l3 3 3-3M0 15.500h16') + c(9, 9, 2.500, 'none', G),
  ahor: s(G, 'M.5 5.500h9v5h-9zM9 8h3') + c(13, 8, 2.500, 'none', G),
  aver: s(G, 'M5.500.5h5v8h-5z') + c(8, 12, 2.500, 'none', G),
  distH: s(G, 'M.5 1.500h4v9h-4zM11.500 1.500h4v9h-4zM3 12v3h10v-3M8 12v3') + c(8, 6, 2.500, 'none', G),
  distV: s(G, 'M.5.5h9v4h-9zM.5 11.500h9v4h-9zM12 3h3v10h-3M12 8h3') + c(5, 8, 2.500, 'none', G),
  tightH: s(G, 'M.5.5h9v5h-9zM0 12h16M5 9l3 3-3 3M11 9l-3 3 3 3') + c(13, 3, 2.500, 'none', G),
  tightV: s(G, 'M.5.5h9v5h-9zM13 0v16M10 4l3 3 3-3M10 12l3-3 3 3') + c(5, 9, 2.500, 'none', G),

  tree: sheetTree,
  props: r(1.500, 3.500, 10, 12, '#f4f8fc', '#345') + s('#3b8cd0', 'M3 8h7M3 10.500h7M3 13h7') + f('#eab878', 'M4 4l5-3h5l2 3-4 3-3-1-3 1z', '#7a5020'),
  funnel: f('#4c9ee4', 'M1 1h14l-5 6v8l-4-2v-6z', '#1c4f90') + s('#d4ecff', 'M5 3l3 4v5'),
  folderA: f('#ffdc48', 'M.5 15.500v-13h4l2 2h9v11z', '#9c7818') + t(4, 14, 12, B, 'A', 'font-family="Liberation Serif" font-weight="bold"'),
  sheet: f('#f4f8fb', 'M.5 1.500h9l6 6v7h-15z', K) + s(K, 'M9 2v6h6') + r(8, 11, 7, 3, '#a8cdf0'),
  format: r(.5, .5, 15, 15, '#f4f8fb', K) + s(K, 'M4 1v9l-3 4M4 3h11M7 15v-4h8M11 11v4M4 10h4', 1),
  part: pageWide(N) + clip,
  partK: pageWide(K) + clip,
  zoomfit: lens(s('#3c6ea0', 'M7 4v6M4 7h6', 1.500)),
  zoomarea: lens(s('#3c6ea0', 'M7 5v5')) + `<path d="M1 1h12v10" fill="none" stroke="#3c6ea0" stroke-dasharray="2 1"/>`,
  pencil: s('#2c6ca8', 'M1 2l10 11', 4) + s('#bfe0f8', 'M2 3l8 9', 2) + s('#245c98', 'M11 12l3 3M9 4h7M11 1l-3 3 3 3', 1.500),
  rotate: s('#2e78c0', 'M2 7q1-5 6-5 4 0 6 3M14 9q-1 5-6 5-4 0-6-3M15 1v5h-5M1 15v-5h5', 1.500),
  viewor: c(7, 8, 6.500, '#9fc4da', '#345') + f('#f4c430', 'M8 6l3 2v3l3 2-2 3-5-3z', '#555') + s('#fff', 'M4 3l6 3-4 5', 2),
  cube: f('#69b4ec', 'M1 4l4-3h10v11l-4 4h-10z', '#2c6ea8') + f('#3c88c8', 'M11 4l4-3v11l-4 4z') + s('#2c6ea8', 'M1 4h10v12'),
  glasses: c(4, 11, 3, '#9fd0ec', '#245880') + c(11, 11, 3, '#9fd0ec', '#245880') + s('#245880', 'M1 10l1-6 2 1M8 10l5-4 2 1'),
  house: f('#fbe49a', 'M3 8l5-5 5 5v7h-10z', '#7a5a10') + s('#c07818', 'M0 9l8-8 8 8', 2) + r(11, 1, 3, 4, '#c03020') + r(6.500, 9.500, 3, 5, '#fff', '#765'),
  books: f('#2cb040', 'M1 7l2-2 3 2v8l-5-2z', K) + f('#f0c020', 'M5 6l2-2 3 1v10l-5-1z', K) + f('#2c80d8', 'M10 3l2-2 3 1v12l-5 1z', K),
  folder: f('#f2b83c', 'M1.500 13.500v-10h5l2 2h5v3', '#9c6810') + f('#ffe9a0', 'M1.500 13.500l3-6h11l-3 6z', '#9c6810'),
  palette: r(.5, .5, 15, 10, '#f4f4e8', N) + s('#c09010', 'M3 3h3v2h-3zM9 3h4v2h-4zM3 8h3') + s(N, 'M9 8h4') + s(B, 'M2 13h7', 2) + f(B, 'M7 10l4 3-4 3z'),
  ball: c(8, 8, 6.500, '#e0a010', '#7c5408') + c(6, 5, 2.500, '#fff4b0') + f('#7c5408', 'M2 11q6 4 12 0-2 4-6 4t-6-4z'),
  first: s('#8688a0', 'M3 3v10', 1.500) + f('#8688a0', 'M12 3v10l-6-5z'),
  prev: f('#8688a0', 'M11 3v10l-6-5z'),
  next: f('#8688a0', 'M5 3v10l6-5z'),
  last: s('#8688a0', 'M13 3v10', 1.500) + f('#8688a0', 'M4 3v10l6-5z'),
  addsheet: f('#eef2f4', 'M4.500 4.500h11v7l-3 3h-8z', N) + s('#e89010', 'M4 0v8M0 4h8M1 1l6 6M7 1l-6 6', 1.500),
  pin: c(9, 7, 5, K) + c(10, 5, 3, '#fff') + s(K, 'M5 10l-3 4M4 8l6 5', 2),
  up: s('#3c5070', 'M3 10l5-5 5 5', 2.500),
  down: s('#3c5070', 'M3 6l5 5 5-5', 2.500),
  left: s('#3c5070', 'M10 3l-5 5 5 5', 2.500),
  right: s('#3c5070', 'M6 3l5 5-5 5', 2.500),

  hdim: s(B, 'M1 0v12M15 0v12M2 6h12', 1.500) + f(B, 'M2 6l4-3v6zM14 6l-4-3v6z') + s(K, 'M0 13h7v2h9', 2),
  vdim: s(B, 'M4 1h12M4 15h12M10 2v12', 1.500) + f(B, 'M10 1l4 5h-8zM10 15l4-5h-8z') + s(K, 'M1 1v14', 2),
  basedim: s(B, 'M1 0v12M15 0v12M1 4h14M1 9h10M10 4v8', 1.500) + f(B, 'M1 4l4-2v4zM15 4l-4-2v4zM1 9l4-2v4zM10 9l-4-2v4z') + s(K, 'M0 14h7v1h9', 2),
  orddim: s(B, 'M1 8l5 5M4 4l6 6M8 1l7 7M3 9l6-6M7 12l7-6', 1.500) + s(K, 'M2 14l5-3M8 15l6-6', 1.500),
  hord: s(B, 'M1 5v8M7 5v8M14 5v8', 2) + s(K, 'M0 14h7v1h9', 2) + s(K, 'M2 0v3M6 1h3l-3 2h3M12 0h3v3h-3'),
  vord: s(B, 'M3 2h7M3 8h7M3 14h7', 2) + s(K, 'M1 1v6h2v8', 2) + s(K, 'M14 1v3M12 6h3l-3 3h3M12 11h3v4h-3M13 13h2'),
  chamfer: s(K, 'M0 5h5l5 5v6', 2) + s(B, 'M15 0l-7 7M8 1v6h6', 2.500),
  datum: s(K, 'M8 0v14M0 15h16', 2) + s(B, 'M9 10h5v4', 2),

  help: t(4, 13, 15, '#777b8a', '?', 'font-weight="bold"'),
  min: r(4, 10, 8, 3, '#687287', '#e8eef0'),
  restore: s('#687287', 'M5 5v-3h10v6h-4M5 3h10M1.500 7.500h9v6h-9zM2 8.500h9', 1),
  close: s('#eef2f4', 'M3 3l11 11M14 3l-11 11', 3) + s('#687287', 'M3 3l10 10M13 3l-10 10', 2),

  windows: f('#e8582c', 'M2 4q3-3 6-1l-1 5q-3-2-6 0z') + f('#7cc430', 'M9 3q3 2 6 0l-1 5q-3 2-6 0z') + f('#4c8cf0', 'M1 9q3-2 6 0l-1 5q-3-2-6 0z') + f('#fcc830', 'M8 9q3 2 6 0l-1 5q-3 2-6 0z'),
  wmp: c(8, 8, 7.500, '#e8eef4', '#e08030') + s('#38a050', 'M1 8a7 7 0 0 0 7 7', 2) + s('#3070d0', 'M8 1a7 7 0 0 1 7 7', 2) + c(8, 8, 4.500, '#2458b0') + f('#fff', 'M6.500 5l4 3-4 3z'),
  ie: s('#7cc4ff', 'M13 11q-5 5-9 1-2-5 3-8 6-1 6 5h-9', 2.500) + s('#a8d8ff', 'M1 14q-2-4 6-10t8-1', 1),
  desk: r(1.500, 2.500, 12, 12, '#e8f2fa', '#456') + s('#2c70c0', 'M11 5q-5-2-6 3 2 4 6 2', 1.500) + s('#d07030', 'M14 1l-6 8', 1.500),
  iepage: f('#f4f4ec', 'M4.500.5h8l3 3v12h-11z', '#555') + s('#2064d0', 'M10 12q-5 3-7-1-1-5 3-6 5 0 4 4h-7', 2) + s('#2064d0', 'M0 13q0-4 5-8t6-1'),
  cam: ball('#7cc828'),
  keyboard: r(0, 7, 16, 8, '#111') + s('#fff', 'M1 9h14M1 11h14M1 13h14') + s('#111', 'M3 7v8M6 7v8M9 7v8M12 7v8M5 5q3-4 6-1t4-2'),
  qmark: r(1.500, .5, 12, 13, '#fff', '#000') + f('#fff', 'M8 13h5v3z', '#000') + t(4, 12, 13, '#1c1c9c', '?', 'font-weight="bold"'),
  camred: ball('#d82828'),
  net: r(5.500, 1.500, 9, 7, '#3458a8', '#223') + r(1.500, 6.500, 9, 6, '#3458a8', '#223') + s('#667', 'M3 15h8M12 9v4'),
  shield: f('#ffd830', 'M8 .5l6 2q1 9-6 13-7-4-6-13z', '#8a7010') + s('#222', 'M8 4v5M8 11v2', 2),
  kav: s('#e02020', 'M4 1v13M14 1l-8 7 6 5', 3) + f('#111', 'M9 8l6 7v-5zM8 15h7v-3z'),
  speaker: c(7, 7, 6, '#c8cccc', '#667') + c(7, 7, 3, '#889', '#556') + s('#889', 'M12 14q3-2 3-5')
};

const svg = name => `<svg width="16" height="16" viewBox="0 0 16 16" aria-hidden="true">${icons[name]}</svg>`;

document.querySelectorAll('.tools[data-items]').forEach(bar => {
  const html = bar.dataset.items.split(' ').map(item => {
    if (item === '|') return '<span class="sep"></span>';
    if (item === ';') return '<span class="sep small"></span>';
    if (item === 'v') return '<button class="drop" aria-label="more"></button>';
    if (item === 'vg') return '<button class="drop off" aria-label="more" disabled></button>';
    return `<button class="tool" aria-label="${item}">${svg(item)}</button>`;
  }).join('');
  bar.insertAdjacentHTML('beforeend', html);
});

document.querySelectorAll('[data-icon]').forEach(el => {
  el.innerHTML = svg(el.dataset.icon);
});
```
